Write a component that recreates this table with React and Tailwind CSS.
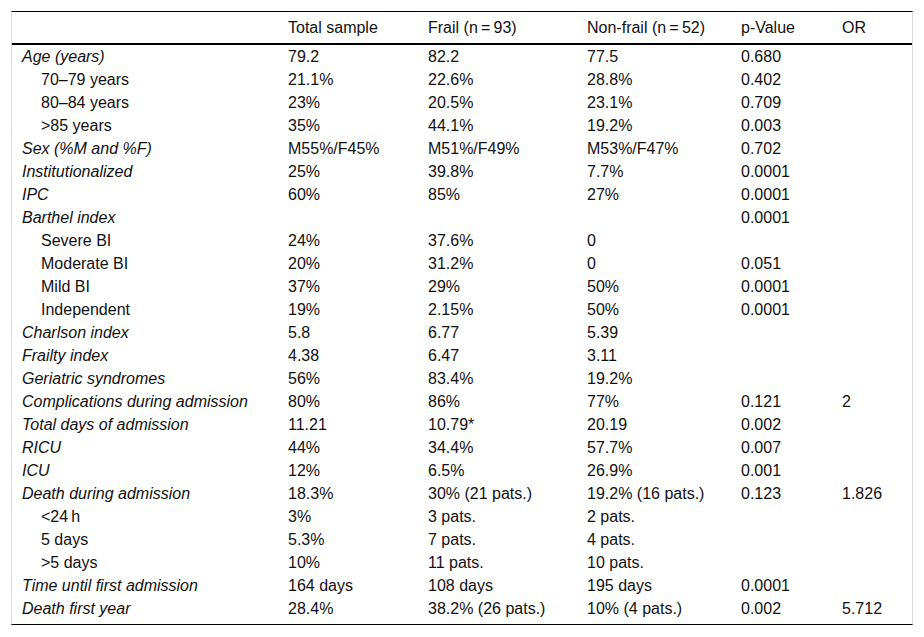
const rows = [
    { label: "Age (years)", italic: true, cells: ["79.2", "82.2", "77.5", "0.680", ""] },
    { label: "70–79 years", sub: true, cells: ["21.1%", "22.6%", "28.8%", "0.402", ""] },
    { label: "80–84 years", sub: true, cells: ["23%", "20.5%", "23.1%", "0.709", ""] },
    { label: ">85 years", sub: true, cells: ["35%", "44.1%", "19.2%", "0.003", ""] },
    { label: "Sex (%M and %F)", italic: true, cells: ["M55%/F45%", "M51%/F49%", "M53%/F47%", "0.702", ""] },
    { label: "Institutionalized", italic: true, cells: ["25%", "39.8%", "7.7%", "0.0001", ""] },
    { label: "IPC", italic: true, cells: ["60%", "85%", "27%", "0.0001", ""] },
    { label: "Barthel index", italic: true, cells: ["", "", "", "0.0001", ""] },
    { label: "Severe BI", sub: true, cells: ["24%", "37.6%", "0", "", ""] },
    { label: "Moderate BI", sub: true, cells: ["20%", "31.2%", "0", "0.051", ""] },
    { label: "Mild BI", sub: true, cells: ["37%", "29%", "50%", "0.0001", ""] },
    { label: "Independent", sub: true, cells: ["19%", "2.15%", "50%", "0.0001", ""] },
    { label: "Charlson index", italic: true, cells: ["5.8", "6.77", "5.39", "", ""] },
    { label: "Frailty index", italic: true, cells: ["4.38", "6.47", "3.11", "", ""] },
    { label: "Geriatric syndromes", italic: true, cells: ["56%", "83.4%", "19.2%", "", ""] },
    { label: "Complications during admission", italic: true, cells: ["80%", "86%", "77%", "0.121", "2"] },
    { label: "Total days of admission", italic: true, cells: ["11.21", "10.79*", "20.19", "0.002", ""] },
    { label: "RICU", italic: true, cells: ["44%", "34.4%", "57.7%", "0.007", ""] },
    { label: "ICU", italic: true, cells: ["12%", "6.5%", "26.9%", "0.001", ""] },
    { label: "Death during admission", italic: true, cells: ["18.3%", "30% (21 pats.)", "19.2% (16 pats.)", "0.123", "1.826"] },
    { label: "<24\u2009h", sub: true, cells: ["3%", "3 pats.", "2 pats.", "", ""] },
    { label: "5 days", sub: true, cells: ["5.3%", "7 pats.", "4 pats.", "", ""] },
    { label: ">5 days", sub: true, cells: ["10%", "11 pats.", "10 pats.", "", ""] },
    { label: "Time until first admission", italic: true, cells: ["164 days", "108 days", "195 days", "0.0001", ""] },
    { label: "Death first year", italic: true, cells: ["28.4%", "38.2% (26 pats.)", "10% (4 pats.)", "0.002", "5.712"] },
];

const cols = "grid grid-cols-[266px_140px_159px_154px_101px_1fr]";

const App = () => {
    return (
        <div className="w-[924px] h-[637px] bg-white pt-[11px] pl-[11px] text-[#111] text-[16px]" style={{ fontFamily: '"Liberation Sans", Arial, sans-serif' }}>
            <div className="w-[902px] border-t border-b border-t-black border-b-black border-x border-x-[#d9d9d9] pb-[4px]">
                {/* header */}
                <div className={`${cols} h-[33px] items-center border-b-2 border-black`}>
                    <div className="pl-[10px]"></div>
                    <div className="pl-[10px]">Total sample</div>
                    <div className="pl-[10px]">Frail (n{"\u2009=\u2009"}93)</div>
                    <div className="pl-[10px]">Non-frail (n{"\u2009=\u2009"}52)</div>
                    <div className="pl-[10px]">p-Value</div>
                    <div className="pl-[10px]">OR</div>
                </div>
                {rows.map((r, i) => (
                    <div key={i} className={`${cols} h-[23px] items-center leading-none`}>
                        <div className={r.sub ? "pl-[29px]" : "pl-[10px] italic"}>{r.label}</div>
                        {r.cells.map((c, j) => (
                            <div key={j} className="pl-[10px]">{c}</div>
                        ))}
                    </div>
                ))}
            </div>
        </div>
    );
};

export default App;
